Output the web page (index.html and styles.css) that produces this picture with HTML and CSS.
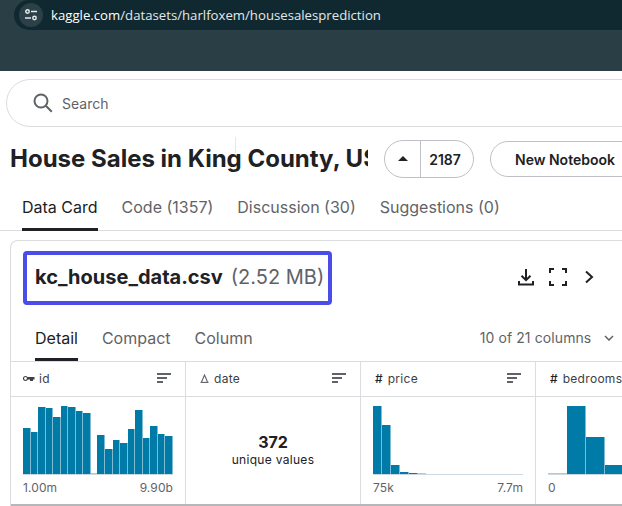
FILE: index.html
```html
<!DOCTYPE html>
<html>
<head>
    <title>House Sales in King County, USA</title>
    <link rel="stylesheet" href="styles.css">
</head>
<body>
    <div class="browser">
        <div class="address">
            <span class="site-icon">
                <svg width="12" height="12" viewBox="0 0 12 12" fill="none" stroke="#e3e9eb" stroke-width="1.500">
                    <circle cx="2.500" cy="2.500" r="1.700"/>
                    <path d="M6 2.500h6"/>
                    <path d="M0 9h6"/>
                    <circle cx="9.500" cy="9" r="1.700"/>
                </svg>
            </span>
            <span class="url">kaggle.com<span class="url-path">/datasets/harlfoxem/housesalesprediction</span></span>
        </div>
    </div>

    <div class="search">
        <svg width="24" height="24" viewBox="0 0 24 24" fill="none" stroke="#5f6368" stroke-width="2">
            <circle cx="10" cy="10" r="6.500"/>
            <path d="M14.800 14.800l6 6"/>
        </svg>
        <span>Search</span>
    </div>

    <span class="cursor"></span>

    <div class="title-row">
        <h1 class="title">House Sales in King County, USA</h1>
        <div class="vote">
            <span class="vote-arrow"></span>
            <span class="vote-count">2187</span>
        </div>
        <div class="notebook">New Notebook</div>
    </div>

    <div class="tabs">
        <span class="tab active">Data Card</span>
        <span class="tab">Code (1357)</span>
        <span class="tab">Discussion (30)</span>
        <span class="tab">Suggestions (0)</span>
    </div>

    <div class="card">
        <div class="file-row">
            <div class="file-box">
                <span class="file-name">kc_house_data.csv</span>
                <span class="file-size">(2.52 MB)</span>
            </div>
            <div class="file-actions">
                <svg width="18" height="18" viewBox="0 0 18 18" fill="none" stroke="#202124" stroke-width="2">
                    <path d="M9 1v11"/>
                    <path d="M4.500 7.800L9 12.200l4.500-4.400"/>
                    <path d="M2 13v3.500h14V13"/>
                </svg>
                <svg width="18" height="18" viewBox="0 0 18 18" fill="none" stroke="#202124" stroke-width="2">
                    <path d="M1 5V1h4"/>
                    <path d="M13 1h4v4"/>
                    <path d="M17 13v4h-4"/>
                    <path d="M5 17H1v-4"/>
                </svg>
                <svg class="next" width="10" height="14" viewBox="0 0 10 14" fill="none" stroke="#202124" stroke-width="2">
                    <path d="M2 1.500L8 7l-6 5.500"/>
                </svg>
            </div>
        </div>

        <div class="view-row">
            <span class="view active">Detail</span>
            <span class="view">Compact</span>
            <span class="view">Column</span>
            <span class="columns">10 of 21 columns
                <svg width="10" height="6" viewBox="0 0 10 6" fill="none" stroke="#5f6368" stroke-width="1.500">
                    <path d="M1 1l4 4 4-4"/>
                </svg>
            </span>
        </div>

        <div class="table">
            <div class="cell head">
                <svg class="key" width="12" height="7" viewBox="0 0 12 7" fill="none">
                    <circle cx="2.500" cy="3.500" r="2" stroke="#3c4043" stroke-width="1.200"/>
                    <path d="M4.500 2h7v2.500h-1.500V6H7V4.500H4.500z" fill="#3c4043"/>
                </svg>
                <span class="col-name">id</span>
                <span class="sort"><i></i><i></i><i></i></span>
            </div>
            <div class="cell head">
                <svg width="9" height="9" viewBox="0 0 9 9" fill="none" stroke="#5f6368" stroke-width="1.100">
                    <path d="M1.500 8L4.500 1l3 7"/>
                    <path d="M0.500 8.400h8"/>
                </svg>
                <span class="col-name">date</span>
                <span class="sort"><i></i><i></i><i></i></span>
            </div>
            <div class="cell head">
                <span class="hash">#</span>
                <span class="col-name">price</span>
                <span class="sort"><i></i><i></i><i></i></span>
            </div>
            <div class="cell head">
                <span class="hash">#</span>
                <span class="col-name">bedrooms</span>
            </div>

            <div class="cell body">
                <div class="hist">
                    <i style="height:46px"></i><i style="height:42px"></i><i style="height:67px"></i><i style="height:66px"></i><i style="height:57px"></i><i style="height:68px"></i><i style="height:67px"></i><i style="height:63px"></i><i style="height:61px"></i><i class="low" style="height:1px"></i><i style="height:39px"></i><i style="height:25px"></i><i style="height:34px"></i><i style="height:31px"></i><i style="height:45px"></i><i style="height:64px"></i><i style="height:36px"></i><i style="height:48px"></i><i style="height:40px"></i><i style="height:38px"></i>
                </div>
                <div class="range"><span>1.00m</span><span>9.90b</span></div>
            </div>
            <div class="cell unique">
                <span class="unique-count">372</span>
                <span class="unique-label">unique values</span>
            </div>
            <div class="cell body">
                <div class="hist">
                    <i style="height:68px"></i><i style="height:49px"></i><i style="height:9px"></i><i style="height:2px"></i><i style="height:1px"></i><i class="low" style="height:1px"></i><i class="none"></i><i class="none"></i><i class="none"></i><i class="none"></i><i class="none"></i><i class="none"></i><i class="none"></i><i class="none"></i><i class="none"></i><i class="none"></i><i class="none"></i><i class="none"></i>
                </div>
                <div class="range"><span>75k</span><span>7.7m</span></div>
            </div>
            <div class="cell body">
                <div class="hist wide">
                    <i class="low" style="height:1px"></i><i style="height:68px"></i><i style="height:37px"></i><i style="height:9px"></i><i style="height:2px"></i><i class="low" style="height:1px"></i><i class="none"></i><i class="none"></i>
                </div>
                <div class="range"><span>0</span></div>
            </div>
        </div>
    </div>
</body>
</html>
```

FILE: styles.css
```css
* {
    box-sizing: border-box;
}
html, body {
    height: 506px;
    overflow: hidden;
}
body {
    margin: 0;
    width: 622px;
    background: #fff;
    color: #202124;
    font-family: Inter, "Liberation Sans", sans-serif;
}
.browser {
    height: 71px;
    background: #2a3f45;
}
.address {
    height: 30px;
    margin-left: 14px;
    padding-left: 5px;
    background: #10282f;
    border-radius: 15px 0 0 15px;
    display: flex;
    align-items: center;
    gap: 8px;
}
.site-icon {
    width: 24px;
    height: 24px;
    border-radius: 50%;
    background: #2b4047;
    display: flex;
    align-items: center;
    justify-content: center;
}
.url {
    font-family: "Open Sans", sans-serif;
    font-size: 13.200px;
    color: #fff;
}
.url-path {
    color: #e3e9eb;
}
.search {
    width: 640px;
    height: 48px;
    margin: 8px 0 0 6px;
    padding-left: 24px;
    border: 1px solid #dadce0;
    border-radius: 24px;
    display: flex;
    align-items: center;
    gap: 7px;
    font-size: 14px;
    color: #5f6368;
}
/* stray text cursor caught in the screenshot */
.cursor {
    position: absolute;
    left: 235px;
    top: 137px;
    width: 1px;
    height: 16px;
    background: #e6e8ea;
}
.title-row {
    height: 38px;
    margin-top: 13px;
    padding-left: 10px;
    display: flex;
    align-items: center;
}
.title {
    width: 358px;
    margin: 0;
    flex: none;
    overflow: hidden;
    white-space: nowrap;
    font-size: 24px;
    font-weight: 700;
    line-height: 38px;
}
.vote {
    width: 90px;
    height: 38px;
    margin-left: 16px;
    flex: none;
    border: 1px solid #bdc1c6;
    border-radius: 19px;
    display: flex;
    align-items: center;
}
.vote-arrow {
    width: 36px;
    height: 36px;
    border-right: 1px solid #bdc1c6;
    position: relative;
}
.vote-arrow::after {
    content: "";
    position: absolute;
    left: 13px;
    top: 15px;
    border-left: 5px solid transparent;
    border-right: 5px solid transparent;
    border-bottom: 5px solid #202124;
}
.vote-count {
    flex: 1;
    padding-right: 4px;
    text-align: center;
    font-size: 14px;
    font-weight: 600;
}
.notebook {
    width: 160px;
    height: 36px;
    margin-left: 16px;
    padding-left: 24px;
    flex: none;
    border: 1px solid #bdc1c6;
    border-radius: 18px;
    display: flex;
    align-items: center;
    font-size: 14px;
    font-weight: 600;
}
.tabs {
    height: 53px;
    padding: 10px 0 0 22px;
    border-bottom: 1px solid #dadce0;
    display: flex;
    gap: 24px;
    font-size: 16px;
    color: #5f6368;
}
.tab {
    height: 43px;
    line-height: 39px;
}
.tab.active {
    color: #202124;
    border-bottom: 3px solid #202124;
}
.card {
    width: 640px;
    margin: 9px 0 0 10px;
    border: 1px solid #dadce0;
    border-bottom: 0;
    border-radius: 8px 0 0 0;
}
.file-row {
    height: 63px;
    padding: 10px 0 0 12px;
    display: flex;
}
.file-box {
    width: 309px;
    height: 54px;
    padding: 0 0 2px 8px;
    border: 4px solid #4b4de8;
    border-radius: 4px;
    display: flex;
    align-items: center;
    gap: 8px;
}
.file-name {
    font-size: 20px;
    font-weight: 700;
}
.file-size {
    font-size: 20px;
    color: #5f6368;
}
.file-actions {
    margin-left: 185px;
    padding-top: 17px;
    display: flex;
    gap: 14px;
}
.next {
    margin: 2px 0 0 3px;
}
.view-row {
    height: 57px;
    padding-left: 24px;
    display: flex;
    gap: 24px;
    font-size: 16px;
    color: #5f6368;
}
.view {
    height: 57px;
    padding-top: 24px;
}
.view.active {
    color: #202124;
    border-bottom: 3px solid #202124;
}
.columns {
    margin-left: 203px;
    padding-top: 25px;
    font-size: 14px;
    letter-spacing: 0.1px;
    display: flex;
    gap: 13px;
}
.columns svg {
    margin-top: 6px;
}
.table {
    display: grid;
    grid-template-columns: repeat(4, 175px);
    grid-template-rows: 35px 107px;
    border-top: 1px solid #dadce0;
    border-bottom: 3px solid #b5b7ba;
}
.cell {
    border-right: 1px solid #dadce0;
}
.cell.head {
    padding: 0 14px 2px;
    border-bottom: 1px solid #dadce0;
    display: flex;
    align-items: center;
    gap: 5px;
    font-size: 12px;
    font-weight: 400;
    color: #3c4043;
}
.key {
    margin: 0 -1px 0 -2px;
}
.hash {
    font-size: 12px;
    font-weight: 500;
    color: #202124;
}
.col-name {
    letter-spacing: 0.3px;
}
.sort {
    margin-left: auto;
    display: flex;
    flex-direction: column;
    gap: 2px;
}
.sort i {
    display: block;
    width: 14px;
    height: 2px;
    background: #5f6368;
}
.sort i:nth-child(2) {
    width: 10px;
}
.sort i:nth-child(3) {
    width: 6px;
}
.cell.body {
    padding: 9px 12px 0;
}
.hist {
    height: 69px;
    display: flex;
    align-items: flex-end;
    border-bottom: 1px solid #cdd9e0;
}
.hist i {
    flex: 1;
    background: #007ba8;
    border-right: 1px solid #7fbcd3;
}
.hist i.low {
    background: #a6cede;
    border-right: 0;
}
.hist i.none {
    background: none;
    border: 0;
}
.hist.wide i {
    flex: none;
    width: 19px;
}
.range {
    margin-top: 5px;
    display: flex;
    justify-content: space-between;
    font-size: 12px;
    letter-spacing: 0.1px;
    color: #5f6368;
}
.unique {
    padding-top: 36px;
    display: flex;
    flex-direction: column;
    align-items: center;
}
.unique-count {
    font-size: 16px;
    font-weight: 700;
    line-height: 18px;
}
.unique-label {
    font-size: 12px;
    letter-spacing: 0.3px;
    line-height: 18px;
}
```
